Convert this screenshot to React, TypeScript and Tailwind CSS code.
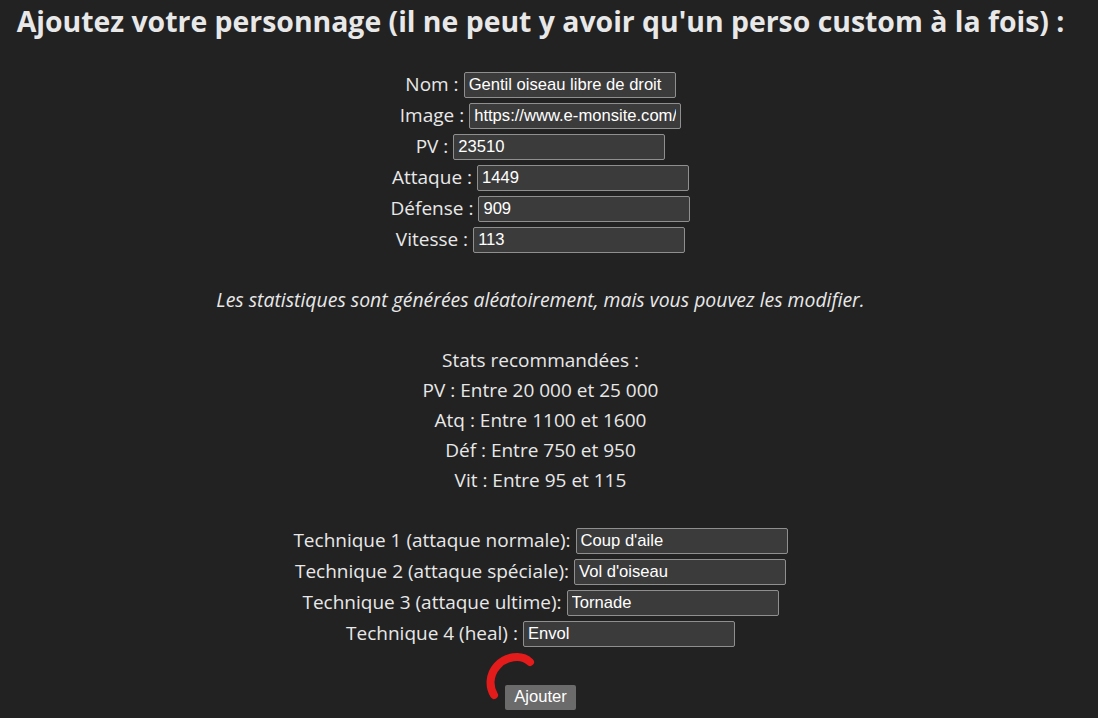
export default function App() {
  const stats = [
    { label: "Nom :", value: "Gentil oiseau libre de droit" },
    { label: "Image :", value: "https://www.e-monsite.com/" },
    { label: "PV :", value: "23510" },
    { label: "Attaque :", value: "1449" },
    { label: "Défense :", value: "909" },
    { label: "Vitesse :", value: "113" },
  ];

  const techniques = [
    { label: "Technique 1 (attaque normale):", value: "Coup d'aile" },
    { label: "Technique 2 (attaque spéciale):", value: "Vol d'oiseau" },
    { label: "Technique 3 (attaque ultime):", value: "Tornade" },
    { label: "Technique 4 (heal) :", value: "Envol" },
  ];

  const inputCls =
    "w-[212px] h-[26px] px-[4px] bg-[#3b3b3b] border border-[#8f8f8f] rounded-[2px] text-white text-[16.6px] font-['Liberation_Sans',Arial,sans-serif] outline-none";

  return (
    <main className="min-h-screen w-full bg-[#222222] text-[#e8e8e8] font-['Open_Sans','Noto_Sans',sans-serif] text-[19px] pr-[17px]">
      <div className="flex flex-col items-center text-center">
        <h1 className="h-[42px] leading-[42px] text-[28.4px] font-bold whitespace-nowrap">
          Ajoutez votre personnage (il ne peut y avoir qu'un perso custom à la fois) :
        </h1>

        {/* Champs du personnage */}
        <div className="mt-[27px] flex flex-col items-center">
          {stats.map((s) => (
            <div key={s.label} className="h-[31px] flex items-center justify-center gap-[5px]">
              <span>{s.label}</span>
              <input className={inputCls} defaultValue={s.value} />
            </div>
          ))}
        </div>

        <p className="mt-[30px] h-[30px] leading-[30px] italic text-[19.4px]">
          Les statistiques sont générées aléatoirement, mais vous pouvez les modifier.
        </p>

        {/* Stats recommandées */}
        <div className="mt-[30px] flex flex-col items-center leading-[30px]">
          <span>Stats recommandées :</span>
          <span>PV : Entre 20 000 et 25 000</span>
          <span>Atq : Entre 1100 et 1600</span>
          <span>Déf : Entre 750 et 950</span>
          <span>Vit : Entre 95 et 115</span>
        </div>

        {/* Techniques */}
        <div className="mt-[30px] flex flex-col items-center">
          {techniques.map((t) => (
            <div key={t.label} className="h-[31px] flex items-center justify-center gap-[5px]">
              <span>{t.label}</span>
              <input className={inputCls} defaultValue={t.value} />
            </div>
          ))}
        </div>

        <div className="relative mt-[32px]">
          <svg
            className="absolute left-[-20px] top-[-30px] pointer-events-none"
            width="56"
            height="50"
            viewBox="0 0 56 50"
            fill="none"
          >
            <path
              d="M9 44 C4 36 4 24 12 15 C20 6 36 2 45 11"
              stroke="#e31b1b"
              strokeWidth="8"
              strokeLinecap="round"
            />
          </svg>
          <button className="h-[25px] w-[71px] bg-[#6b6b6b] rounded-[2px] text-white text-[16.6px] font-['Liberation_Sans',Arial,sans-serif]">
            Ajouter
          </button>
        </div>
      </div>
    </main>
  );
}
